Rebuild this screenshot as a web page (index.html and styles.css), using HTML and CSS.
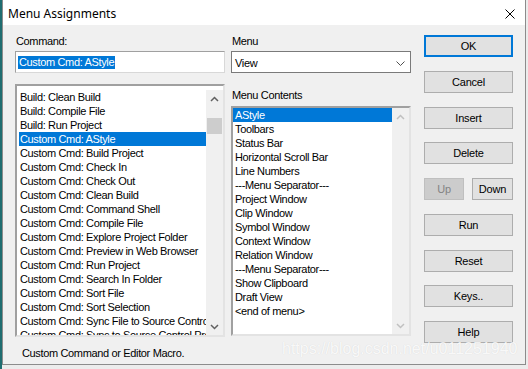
FILE: index.html
```html
<!DOCTYPE html>
<html lang="en">
<head>
    <meta charset="UTF-8">
    <meta name="viewport" content="width=device-width, initial-scale=1.0">
    <title>Menu Assignments</title>
    <link rel="stylesheet" href="styles.css">
</head>
<body>
    <div class="window">
        <div class="titlebar">
            <span class="title">Menu Assignments</span>
            <svg class="close" width="10" height="10" viewBox="0 0 10 10"><path d="M0.5 0.5L9.5 9.5M9.5 0.5L0.5 9.5" stroke="#000" stroke-width="1" fill="none"/></svg>
        </div>

        <div class="client">
            <!-- command column -->
            <div class="col-command">
                <div class="label">Command:</div>
                <div class="edit"><span class="sel">Custom Cmd: AStyle</span></div>
                <div class="listbox cmd-list">
                    <div class="items">
                        <div class="row">Build: Clean Build</div>
                        <div class="row">Build: Compile File</div>
                        <div class="row">Build: Run Project</div>
                        <div class="row active">Custom Cmd: AStyle</div>
                        <div class="row">Custom Cmd: Build Project</div>
                        <div class="row">Custom Cmd: Check In</div>
                        <div class="row">Custom Cmd: Check Out</div>
                        <div class="row">Custom Cmd: Clean Build</div>
                        <div class="row">Custom Cmd: Command Shell</div>
                        <div class="row">Custom Cmd: Compile File</div>
                        <div class="row">Custom Cmd: Explore Project Folder</div>
                        <div class="row">Custom Cmd: Preview in Web Browser</div>
                        <div class="row">Custom Cmd: Run Project</div>
                        <div class="row">Custom Cmd: Search In Folder</div>
                        <div class="row">Custom Cmd: Sort File</div>
                        <div class="row">Custom Cmd: Sort Selection</div>
                        <div class="row">Custom Cmd: Sync File to Source Control</div>
                        <div class="row">Custom Cmd: Sync to Source Control Project</div>
                    </div>
                    <div class="scrollbar">
                        <div class="arrow"><svg width="9" height="6" viewBox="0 0 9 6"><path d="M1 5L4.5 1.5L8 5" stroke="#606060" stroke-width="1.5" fill="none"/></svg></div>
                        <div class="track"><div class="thumb"></div></div>
                        <div class="arrow"><svg width="9" height="6" viewBox="0 0 9 6"><path d="M1 1L4.5 4.5L8 1" stroke="#606060" stroke-width="1.5" fill="none"/></svg></div>
                    </div>
                </div>
                <div class="status">Custom Command or Editor Macro.</div>
            </div>

            <!-- menu column -->
            <div class="col-menu">
                <div class="label">Menu</div>
                <div class="combo">
                    <span>View</span>
                    <svg width="9" height="5" viewBox="0 0 9 5"><path d="M0.5 0.5L4.5 4.5L8.5 0.5" stroke="#505050" stroke-width="1" fill="none"/></svg>
                </div>
                <div class="label contents-label">Menu Contents</div>
                <div class="listbox menu-list">
                    <div class="items">
                        <div class="row active">AStyle</div>
                        <div class="row">Toolbars</div>
                        <div class="row">Status Bar</div>
                        <div class="row">Horizontal Scroll Bar</div>
                        <div class="row">Line Numbers</div>
                        <div class="row">---Menu Separator---</div>
                        <div class="row">Project Window</div>
                        <div class="row">Clip Window</div>
                        <div class="row">Symbol Window</div>
                        <div class="row">Context Window</div>
                        <div class="row">Relation Window</div>
                        <div class="row">---Menu Separator---</div>
                        <div class="row">Show Clipboard</div>
                        <div class="row">Draft View</div>
                        <div class="row">&lt;end of menu&gt;</div>
                    </div>
                    <div class="scrollbar disabled">
                        <div class="arrow"><svg width="9" height="6" viewBox="0 0 9 6"><path d="M1 5L4.5 1.5L8 5" stroke="#c0c0c0" stroke-width="1.5" fill="none"/></svg></div>
                        <div class="track"></div>
                        <div class="arrow"><svg width="9" height="6" viewBox="0 0 9 6"><path d="M1 1L4.5 4.5L8 1" stroke="#c0c0c0" stroke-width="1.5" fill="none"/></svg></div>
                    </div>
                </div>
            </div>

            <!-- buttons -->
            <div class="col-buttons">
                <button class="btn default">OK</button>
                <button class="btn">Cancel</button>
                <button class="btn">Insert</button>
                <button class="btn">Delete</button>
                <div class="btn-pair">
                    <button class="btn" disabled>Up</button>
                    <button class="btn">Down</button>
                </div>
                <button class="btn">Run</button>
                <button class="btn">Reset</button>
                <button class="btn">Keys..</button>
                <button class="btn">Help</button>
            </div>
        </div>
    </div>

    <div class="watermark">https://blog.csdn.net/u011251940</div>
</body>
</html>
```

FILE: styles.css
```css
body {
    margin: 0;
    height: 369px;
    overflow: hidden;
    position: relative;
    background: linear-gradient(90deg, #1f6d70 0, #1f6d70 2px, #ececec 2px);
    font-family: "Liberation Sans", Arial, sans-serif;
    font-size: 11px;
    letter-spacing: -0.35px;
    color: #000;
}
.window {
    margin-left: 2px;
    width: 524px;
    height: 365px;
    box-sizing: border-box;
    border: 1px solid #8c8c8c;
    border-top: 0;
    background: #f0f0f0;
}
.titlebar {
    height: 25px;
    background: #fff;
    display: flex;
    align-items: center;
    padding-left: 5px;
}
.title {
    font-family: "Noto Sans", sans-serif;
    font-size: 12px;
    letter-spacing: 0;
    margin-top: 1px;
}
.close {
    margin-left: auto;
    margin-right: 10px;
    margin-top: 2px;
}
.client {
    display: flex;
    padding: 9px 0 0 12px;
}
.label {
    height: 14px;
    line-height: 14px;
    padding-left: 1px;
}

/* command column */
.col-command {
    width: 210px;
}
.edit {
    margin-top: 3px;
    height: 22px;
    box-sizing: border-box;
    border: 1px solid;
    border-color: #a0a0a0 #d8d8d8 #d8d8d8 #a0a0a0;
    background: #fff;
    display: flex;
    align-items: center;
    padding-left: 2px;
}
.sel {
    background: #0078d7;
    color: #fff;
    line-height: 13px;
    padding: 0 1px;
    margin-top: 1px;
}
.listbox {
    display: flex;
    box-sizing: border-box;
    border: 2px solid;
    border-color: #a0a0a0 #e3e3e3 #e3e3e3 #a0a0a0;
    background: #fff;
}
.items {
    flex: 1;
    overflow: hidden;
}
.row {
    height: 14px;
    line-height: 14px;
    white-space: nowrap;
}
.row.active {
    background: #0078d7;
    color: #fff;
}
.cmd-list {
    margin-top: 11px;
    height: 253px;
    padding-top: 4px;
}
.cmd-list .row {
    margin-left: 2px;
    padding-left: 1px;
}
.menu-list {
    margin-top: 4px;
    height: 230px;
}
.menu-list .row {
    padding-left: 2px;
}
.scrollbar {
    width: 17px;
    display: flex;
    flex-direction: column;
    background: #f0f0f0;
}
.arrow {
    height: 17px;
    display: flex;
    align-items: center;
    justify-content: center;
}
.track {
    flex: 1;
}
.thumb {
    margin: 11px 1px 0;
    height: 16px;
    background: #cdcdcd;
}
.status {
    margin-top: 9px;
    height: 14px;
    line-height: 14px;
    padding-left: 7px;
}

/* menu column */
.col-menu {
    width: 180px;
    margin-left: 6px;
}
.combo {
    margin-top: 3px;
    height: 22px;
    box-sizing: border-box;
    border: 1px solid #7a7a7a;
    background: #fff;
    display: flex;
    align-items: center;
    padding: 1px 5px 0 3px;
    justify-content: space-between;
}
.combo svg {
    margin-top: 1px;
}
.contents-label {
    margin-top: 15px;
}

/* buttons */
.col-buttons {
    width: 89px;
    margin-left: 13px;
    margin-top: 1px;
    display: flex;
    flex-direction: column;
    gap: 13.75px;
}
.btn {
    height: 22px;
    width: 100%;
    box-sizing: border-box;
    border: 1px solid #adadad;
    background: #e1e1e1;
    font-family: inherit;
    font-size: 11px;
    letter-spacing: -0.2px;
    color: #000;
    padding: 0;
}
.btn.default {
    border: 2px solid #0078d7;
}
.btn:disabled {
    background: #cccccc;
    border-color: #bfbfbf;
    color: #838383;
}
.btn-pair {
    display: flex;
    gap: 8px;
}
.btn-pair .btn:first-child {
    width: 40px;
}
.btn-pair .btn:last-child {
    width: 41px;
}

.watermark {
    position: absolute;
    left: 282px;
    top: 340px;
    font-size: 16px;
    line-height: 18px;
    letter-spacing: 0;
    color: rgba(255, 255, 255, 0.85);
    text-shadow: 0 0 1px rgba(0, 0, 0, 0.12);
}
```
